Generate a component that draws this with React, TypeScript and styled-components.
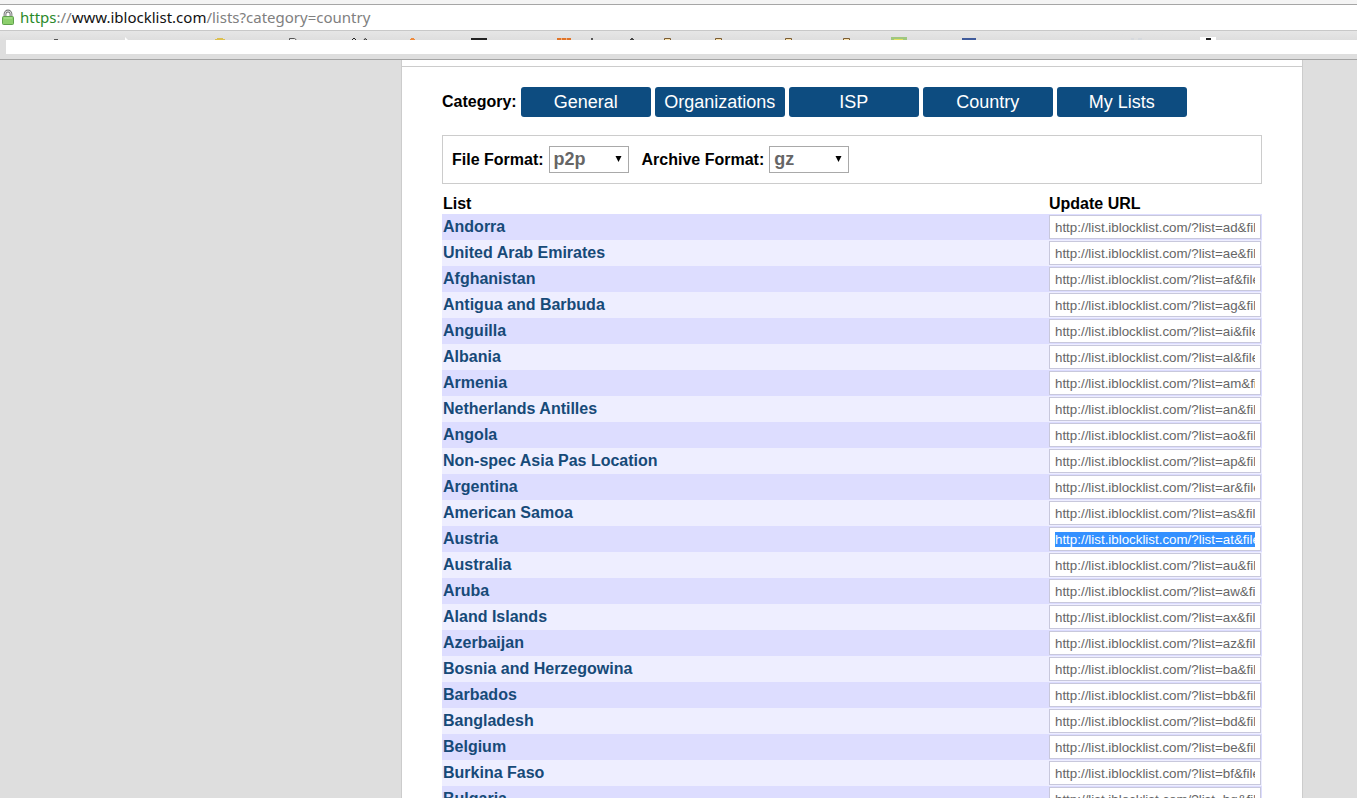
import { useEffect, useRef } from 'react';
import styled, { createGlobalStyle, css } from 'styled-components';

const Global = createGlobalStyle`
  * { box-sizing: border-box; }
  body { margin: 0; background: #dedede; }
`;

const Window = styled.div`
  display: flex;
  flex-direction: column;
  height: 100vh;
  overflow: hidden;
  font-family: 'Liberation Sans', Arial, sans-serif;
  font-size: 16px;
`;

const AddressBar = styled.header`
  display: flex;
  align-items: center;
  flex: none;
  height: 31px;
  padding-left: 2px;
  gap: 6px;
  background: #fff;
  border-top: 4px solid #f4f4f4;
  border-bottom: 1px solid #c8c8c8;
  box-shadow: inset 0 1px #a6a6a6;
`;

const Address = styled.div`
  font-family: 'Noto Sans', 'Open Sans', sans-serif;
  font-size: 15px;
  line-height: 24px;
  color: #808080;
  white-space: nowrap;
`;

const Scheme = styled.span`
  color: #2a8a2a;
`;

const Host = styled.span`
  color: #111;
`;

const BookmarkBar = styled.div`
  flex: none;
  height: 29px;
  overflow: hidden;
  background: linear-gradient(#e6e6e6, #dedede 9px);
  border-bottom: 1px solid #a4a4a4;
`;

const BookmarkIcons = styled.svg`
  display: block;
`;

const BlankStrip = styled.div`
  height: 14px;
  margin-left: 6px;
  background: #fff;
`;

const Viewport = styled.div`
  flex: 1;
  min-height: 0;
  overflow: hidden;
`;

const Page = styled.main`
  width: 902px;
  max-width: 100%;
  margin-left: 401px;
  padding-top: 6px;
  background: #fff;
  border: solid #ccc;
  border-width: 0 1px;
`;

const Content = styled.div`
  padding: 20px 40px;
  border-top: 1px solid #ccc;
`;

const CategoryNav = styled.nav`
  display: flex;
  align-items: center;
  gap: 4px;
  white-space: nowrap;
`;

const Bold = styled.span`
  font-weight: bold;
`;

const CategoryLink = styled.a`
  width: 130px;
  height: 30px;
  border-radius: 3px;
  background: #0d4c80;
  color: #fff;
  font-size: 18px;
  line-height: 30px;
  text-align: center;
  text-decoration: none;
`;

const Formats = styled.form`
  display: flex;
  align-items: center;
  gap: 13px;
  height: 49px;
  margin: 18px 0 10px;
  padding: 0 9px;
  border: 1px solid #ccc;
`;

const Field = styled.label`
  display: flex;
  align-items: baseline;
  gap: 5px;
  font-weight: bold;
`;

const SelectBox = styled.span`
  position: relative;
  display: block;
`;

const Select = styled.select`
  display: block;
  appearance: none;
  width: 80px;
  height: 27px;
  padding: 0 4px 2px;
  border: 1px solid #a9a9a9;
  border-radius: 0;
  background: #fff;
  color: #666;
  font: bold 18px 'Liberation Sans', Arial, sans-serif;
`;

const Arrow = styled.svg`
  position: absolute;
  top: 10px;
  right: 7px;
  pointer-events: none;
`;

const Lists = styled.table`
  width: 100%;
  border-collapse: collapse;
  table-layout: fixed;
`;

const Heading = styled.th<{ $url?: boolean }>`
  height: 20px;
  padding: 0 1px;
  line-height: 20px;
  text-align: left;
  ${(p) => p.$url && css`width: 214px;`}
`;

const Row = styled.tr`
  height: 26px;
  background: #eef;
  &:nth-child(odd) { background: #ddf; }
`;

const Cell = styled.td`
  padding: 1px;
  line-height: 24px;
  vertical-align: top;
`;

const ListLink = styled.a`
  display: block;
  color: #174a78;
  font-weight: bold;
  text-decoration: none;
`;

const UrlInput = styled.input`
  display: block;
  width: 100%;
  height: 24px;
  padding: 0 5px;
  border: 1px solid #c8c8dc;
  background: #fff;
  color: #666;
  font-family: 'Liberation Sans', Arial, sans-serif;
  outline: none;
  &::selection { background: #3390ff; color: #fff; }
`;

const categories = ['General', 'Organizations', 'ISP', 'Country', 'My Lists'];

const countries: [string, string][] = [
  ['ad', 'Andorra'], ['ae', 'United Arab Emirates'], ['af', 'Afghanistan'],
  ['ag', 'Antigua and Barbuda'], ['ai', 'Anguilla'], ['al', 'Albania'],
  ['am', 'Armenia'], ['an', 'Netherlands Antilles'], ['ao', 'Angola'],
  ['ap', 'Non-spec Asia Pas Location'], ['ar', 'Argentina'], ['as', 'American Samoa'],
  ['at', 'Austria'], ['au', 'Australia'], ['aw', 'Aruba'], ['ax', 'Aland Islands'],
  ['az', 'Azerbaijan'], ['ba', 'Bosnia and Herzegowina'], ['bb', 'Barbados'],
  ['bd', 'Bangladesh'], ['be', 'Belgium'], ['bf', 'Burkina Faso'], ['bg', 'Bulgaria'],
];

function Lock() {
  return (
    <svg width="12" height="16" viewBox="0 0 12 16" aria-hidden="true">
      <path d="M3 8V5a3 3 0 0 1 6 0V8" fill="none" stroke="#7a7a7a" strokeWidth="2.8" />
      <path d="M3 8V5a3 3 0 0 1 6 0V8" fill="none" stroke="#d8d8d8" strokeWidth="1" />
      <rect x=".5" y="7.5" width="11" height="8" rx="1" fill="#8ccf6c" stroke="#5fa04c" />
      <path d="M2 9h8" stroke="#b4e59a" />
    </svg>
  );
}

function Bookmarks() {
  return (
    <BookmarkIcons width="1357" height="9" aria-hidden="true">
      <path d="M54 8.5h4" stroke="#555" />
      <path d="M125 6l3 3h-3z" fill="#fff" />
      <path d="M215 9v-1h2v-1h6v1h2v1z" fill="#dcc050" />
      <path d="M289.5 9v-1.5h5l2 1.5" fill="#eee" stroke="#555" />
      <path d="M352 9l2-2 2 2M364 9l1-1.5 2 1.5" fill="none" stroke="#222" />
      <path d="M410 9v-1h1v-1h3v1h1v1z" fill="#ee8a3c" />
      <path d="M471 7h16v2h-16z" fill="#222" />
      <path d="M557 7h14v2h-14z" fill="#e07428" />
      <path d="M561.5 7v2M566.5 7v2" stroke="#f0b080" />
      <path d="M591 7h2v2h-2z" fill="#555" />
      <path d="M630 9v-1h1v-1h2v1h1v1z" fill="#444" />
      {[664, 715, 785, 843].map((x) => (
        <path key={x} d={`M${x + 0.5} 9v-1.5h6v1.5`} fill="#fbe3ad" stroke="#7b5c33" />
      ))}
      <path d="M891 6h16v3h-16z" fill="#9fc780" />
      <path d="M894 8h9v1h-9z" fill="#e2e05c" />
      <path d="M962 7h14v2h-14z" fill="#3f5b9b" />
      <path d="M1131 8h3M1138 8h4" stroke="#ccd3dc" />
      <path d="M1200 6h16v3h-16z" fill="#fff" />
      <path d="M1206 7h5v2h-5z" fill="#222" />
    </BookmarkIcons>
  );
}

function FormatSelect({ label, value }: { label: string; value: string }) {
  return (
    <Field>
      {label}
      <SelectBox>
        <Select defaultValue={value}>
          <option>{value}</option>
        </Select>
        <Arrow width="7" height="6" viewBox="0 0 7 6" aria-hidden="true">
          <path d="M.5 0h6L3.5 6z" fill="#000" />
        </Arrow>
      </SelectBox>
    </Field>
  );
}

export default function App() {
  const selected = useRef<HTMLInputElement>(null);

  useEffect(() => {
    selected.current?.focus({ preventScroll: true });
    selected.current?.setSelectionRange(0, 200, 'backward');
  }, []);

  return (
    <Window>
      <Global />
      <AddressBar>
        <Lock />
        <Address>
          <Scheme>https</Scheme>://<Host>www.iblocklist.com</Host>/lists?category=country
        </Address>
      </AddressBar>
      <BookmarkBar>
        <Bookmarks />
        <BlankStrip />
      </BookmarkBar>
      <Viewport>
        <Page>
          <Content>
            <CategoryNav>
              <Bold>Category:</Bold>
              {categories.map((name) => (
                <CategoryLink key={name} href="#">{name}</CategoryLink>
              ))}
            </CategoryNav>
            <Formats>
              <FormatSelect label="File Format:" value="p2p" />
              <FormatSelect label="Archive Format:" value="gz" />
            </Formats>
            <Lists>
              <thead>
                <tr>
                  <Heading>List</Heading>
                  <Heading $url>Update URL</Heading>
                </tr>
              </thead>
              <tbody>
                {countries.map(([code, name]) => (
                  <Row key={code}>
                    <Cell>
                      <ListLink href="#">{name}</ListLink>
                    </Cell>
                    <Cell>
                      <UrlInput
                        ref={code === 'at' ? selected : undefined}
                        aria-label={`${name} update URL`}
                        readOnly
                        value={`http://list.iblocklist.com/?list=${code}&fileformat=p2p&archiveformat=gz`}
                      />
                    </Cell>
                  </Row>
                ))}
              </tbody>
            </Lists>
          </Content>
        </Page>
      </Viewport>
    </Window>
  );
}
